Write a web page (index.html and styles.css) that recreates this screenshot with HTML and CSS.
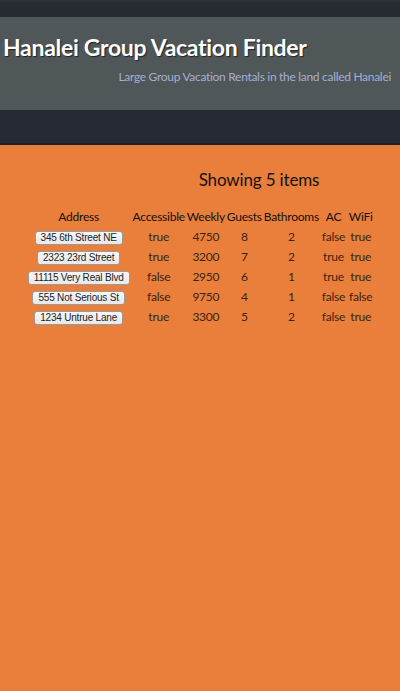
FILE: index.html
```html
<!DOCTYPE html>
<html>
<head>
<meta charset="utf-8">
<link rel="stylesheet" href="styles.css">
</head>
<body>
<div class="topline"></div>
<div class="topbar"></div>
<header class="banner">
  <h1 class="title">Hanalei Group Vacation Finder</h1>
  <p class="subtitle">Large Group Vacation Rentals in the land called Hanalei</p>
</header>
<div class="navbar"></div>
<main class="content">
  <h2 class="count">Showing 5 items</h2>
  <table class="listing">
    <thead>
      <tr><th>Address</th><th>Accessible</th><th>Weekly</th><th>Guests</th><th>Bathrooms</th><th>AC</th><th>WiFi</th></tr>
    </thead>
    <tbody>
      <tr><td><button class="addr">345 6th Street NE</button></td><td>true</td><td>4750</td><td>8</td><td>2</td><td>false</td><td>true</td></tr>
      <tr><td><button class="addr">2323 23rd Street</button></td><td>true</td><td>3200</td><td>7</td><td>2</td><td>true</td><td>true</td></tr>
      <tr><td><button class="addr">11115 Very Real Blvd</button></td><td>false</td><td>2950</td><td>6</td><td>1</td><td>true</td><td>true</td></tr>
      <tr><td><button class="addr">555 Not Serious St</button></td><td>false</td><td>9750</td><td>4</td><td>1</td><td>false</td><td>false</td></tr>
      <tr><td><button class="addr">1234 Untrue Lane</button></td><td>true</td><td>3300</td><td>5</td><td>2</td><td>false</td><td>true</td></tr>
    </tbody>
  </table>
</main>
</body>
</html>
```

FILE: styles.css
```css
html, body {
  margin: 0;
  padding: 0;
  height: 100%;
}
body {
  font-family: Lato, "Open Sans", sans-serif;
  background: #e97f3a;
  display: flex;
  flex-direction: column;
}
.topline {
  height: 2px;
  background: #2f3135;
}
.topbar {
  height: 15px;
  background: #262a33;
}
.banner {
  background: #4f5759;
  height: 93px;
  box-sizing: border-box;
  padding: 16px 9px 0 3px;
  display: flex;
  flex-direction: column;
}
.title {
  margin: 0;
  font-size: 23px;
  letter-spacing: -0.3px;
  font-weight: 700;
  color: #ffffff;
  line-height: 28px;
  text-shadow: 1px 1px 1px #1f2326;
}
.subtitle {
  margin: 8px 0 0 0;
  text-align: right;
  font-size: 12px;
  letter-spacing: -0.3px;
  line-height: 16px;
  color: #a6aed0;
}
.navbar {
  height: 33px;
  background: #262a33;
  border-bottom: 2px solid #1d2027;
}
.content {
  flex: 1;
  padding: 24px 0 0 0;
}
.count {
  margin: 0 0 17px 0;
  padding-left: 118px;
  text-align: center;
  font-size: 17px;
  letter-spacing: -0.15px;
  font-weight: 400;
  color: #111;
  line-height: 22px;
}
.listing {
  margin: 0 auto;
  border-collapse: separate;
  border-spacing: 2px 0;
  font-size: 12px;
  letter-spacing: -0.25px;
  color: #3a2414;
}
.listing th {
  font-weight: 400;
  color: #111;
  padding: 0 0 1px 0;
  line-height: 18px;
}
.listing td {
  text-align: center;
  padding: 0 1px;
  height: 20px;
  line-height: 16px;
}
.addr {
  font-family: "Liberation Sans", Arial, sans-serif;
  font-size: 10px;
  letter-spacing: -0.2px;
  line-height: 12px;
  padding: 0 5px;
  background: linear-gradient(#f7f7f7, #e9e9e9);
  color: #222;
  border: 1px solid #9a9a9a;
  border-radius: 3px;
}
```
